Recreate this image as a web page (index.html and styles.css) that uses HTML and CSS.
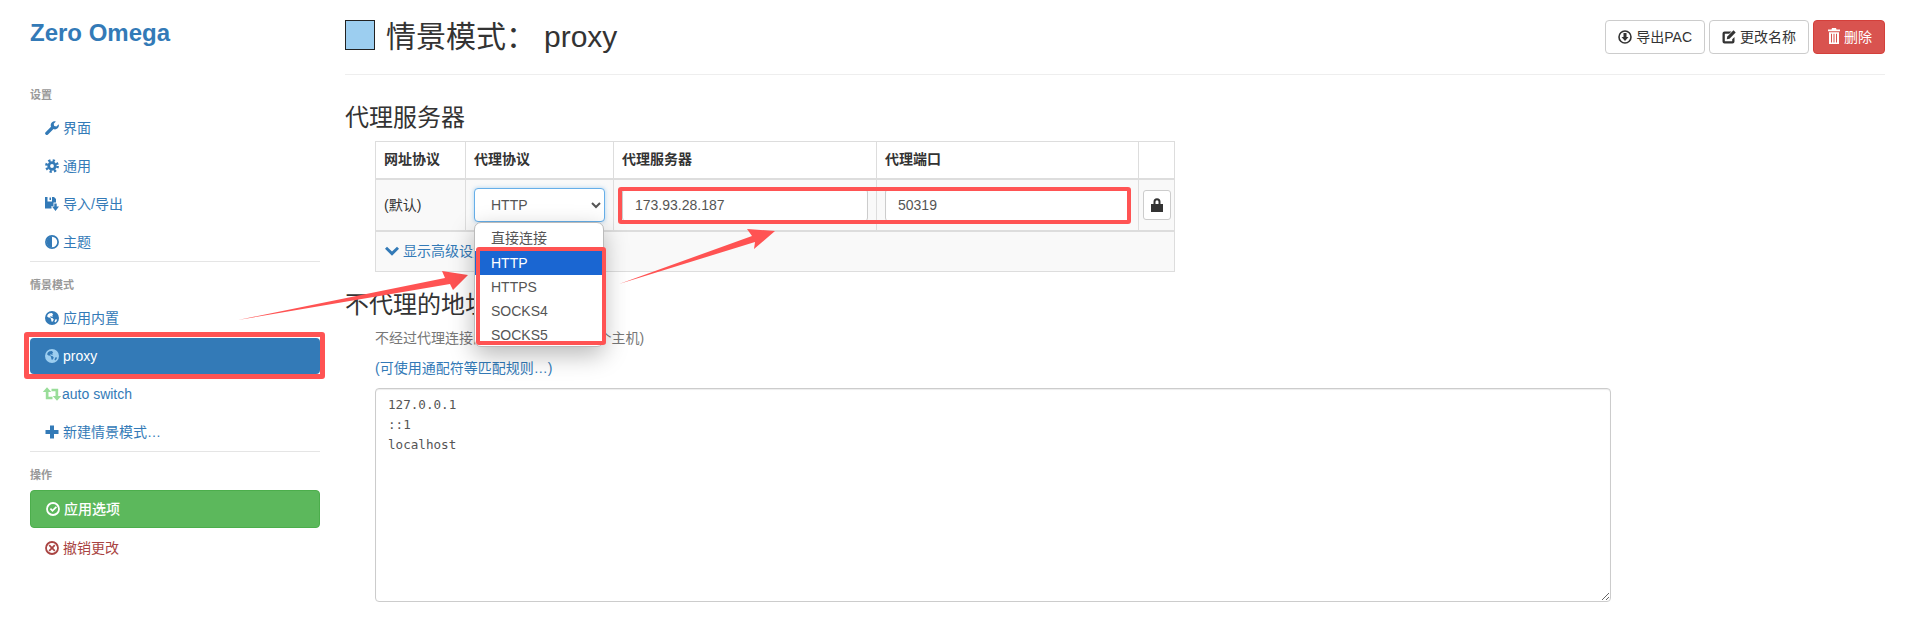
FILE: index.html
```html
<!DOCTYPE html>
<html lang="zh">
<head>
<meta charset="utf-8">
<title>Zero Omega</title>
<link rel="stylesheet" href="styles.css">
</head>
<body>
<svg class="sprite" aria-hidden="true">
  <symbol id="i-wrench" viewBox="0 0 14 14"><path d="M13.700 3.200a4 4 0 0 1-5.200 4.900L3 13.500a1.500 1.500 0 0 1-2.400-2.200L6 5.700A4 4 0 0 1 10.900.4L8.700 2.700l.5 2.200 2.200.5z"/></symbol>
  <symbol id="i-cog" viewBox="0 0 14 14"><circle cx="7" cy="7" r="3.300" fill="none" stroke="currentColor" stroke-width="2.800"/><circle cx="7" cy="7" r="5.600" fill="none" stroke="currentColor" stroke-width="2.600" stroke-dasharray="2.200 2.200"/></symbol>
  <symbol id="i-save" viewBox="0 0 14 14"><path fill-rule="evenodd" d="M0 0h2.500v4.500h4.500V0h2L11 2v3.500H8.500V9H6.500v2.500H0zM4.500.5h1.500v2.500H4.500z"/><path d="M9.300 6.500h2.400V9.500H14L10.500 14 7 9.500h2.300z"/></symbol>
  <symbol id="i-half" viewBox="0 0 14 14"><circle cx="7" cy="7" r="6.100" fill="none" stroke="currentColor" stroke-width="1.700"/><path d="M7 1.500a5.500 5.500 0 0 0 0 11z"/></symbol>
  <symbol id="i-globe" viewBox="0 0 14 14"><path fill-rule="evenodd" d="M7 0a7 7 0 1 1 0 14A7 7 0 0 1 7 0zM4.500 2.200 3 3.200 2 5.200l1.500 1.300 1.800.3.800 1.400.4 2.300 1 .2 1.300-2-1-1.400-2-.6-.8-1.200 1.200-.2.800.6.800-.6-.6-1 1-.8L6.900 2zM10.500 8.200l-1 2.400.6 1 1.400-1.400.6-1.800z"/></symbol>
  <symbol id="i-retweet" viewBox="0 0 18 14"><path d="M4 .3 8.300 5H5.500V9.700H9.500V12.300H2.800V5H-.3z"/><path d="M14 13.700 9.700 9H12.500V4.300H8.500V1.700H15.200V9H18.300z"/></symbol>
  <symbol id="i-plus" viewBox="0 0 14 14"><path d="M5 .5h4v4.500h4.500v4H9v4.500H5V9H.5V5H5z"/></symbol>
  <symbol id="i-ok" viewBox="0 0 14 14"><circle cx="7" cy="7" r="6" fill="none" stroke="currentColor" stroke-width="1.800"/><path d="M3.800 7.200 5 6l1.500 1.500L9.800 4.200 11 5.400 6.500 9.900z"/></symbol>
  <symbol id="i-remove" viewBox="0 0 14 14"><circle cx="7" cy="7" r="6" fill="none" stroke="currentColor" stroke-width="1.800"/><path d="M4.800 3.600 7 5.800l2.200-2.200 1.200 1.200L8.200 7l2.200 2.200-1.200 1.200L7 8.200l-2.200 2.200-1.200-1.200L5.800 7 3.600 4.800z"/></symbol>
  <symbol id="i-chevron" viewBox="0 0 14 14"><path d="M2 2.700 7 7.600l5-4.900 2 2-7 7-7-7z"/></symbol>
  <symbol id="i-lock" viewBox="0 0 14 14"><path fill-rule="evenodd" d="M3.500 6V3.700a3.500 3.500 0 0 1 7 0V6H13v8H1V6zm2 0h3V3.700a1.500 1.500 0 0 0-3 0z"/></symbol>
  <symbol id="i-down" viewBox="0 0 14 14"><circle cx="7" cy="7" r="6" fill="none" stroke="currentColor" stroke-width="1.600"/><path d="M5.500 3h3v4h2L7 11 3.500 7h2z"/></symbol>
  <symbol id="i-edit" viewBox="0 0 14 14"><path d="M9.500 1.500H2.500A2 2 0 0 0 .5 3.500v8a2 2 0 0 0 2 2h8a2 2 0 0 0 2-2V7l-2.300 2.300v1.900H2.800V3.800h4.400z"/><path d="M11.500.3 13.700 2.500 7.500 8.700 4.800 9.200l.5-2.700z"/></symbol>
  <symbol id="i-trash" viewBox="0 0 12 16"><path d="M4 0h4l.5 1.500H12V3.200H0V1.500h3.500z"/><path fill-rule="evenodd" d="M1 4.200h10V16H1zM3 5.700v8.800h1V5.700zm2.500 0v8.800h1V5.700zm2.500 0v8.800h1V5.700z"/></symbol>
</svg>

<div class="page">
  <aside class="sidebar">
    <div class="brand">Zero Omega</div>
    <div class="label label-first">设置</div>
    <ul class="nav">
      <li><a class="pill"><svg class="ico"><use href="#i-wrench"/></svg>界面</a></li>
      <li><a class="pill"><svg class="ico"><use href="#i-cog"/></svg>通用</a></li>
      <li><a class="pill"><svg class="ico"><use href="#i-save"/></svg>导入/导出</a></li>
      <li><a class="pill"><svg class="ico"><use href="#i-half"/></svg>主题</a></li>
    </ul>
    <div class="divider"></div>
    <div class="label">情景模式</div>
    <ul class="nav">
      <li><a class="pill"><svg class="ico"><use href="#i-globe"/></svg>应用内置</a></li>
      <li><a class="pill active"><svg class="ico ico-light"><use href="#i-globe"/></svg>proxy</a></li>
      <li><a class="pill"><svg class="ico-wide"><use href="#i-retweet"/></svg>auto switch</a></li>
      <li><a class="pill"><svg class="ico"><use href="#i-plus"/></svg>新建情景模式…</a></li>
    </ul>
    <div class="divider"></div>
    <div class="label">操作</div>
    <ul class="nav">
      <li><a class="pill apply"><svg class="ico"><use href="#i-ok"/></svg>应用选项</a></li>
      <li><a class="pill discard"><svg class="ico"><use href="#i-remove"/></svg>撤销更改</a></li>
    </ul>
  </aside>

  <main class="main">
    <header class="head">
      <h1 class="title"><span class="swatch"></span>情景模式： <span class="title-name">proxy</span></h1>
      <div class="actions">
        <a class="btn"><svg class="ico"><use href="#i-down"/></svg>导出PAC</a>
        <a class="btn"><svg class="ico"><use href="#i-edit"/></svg>更改名称</a>
        <a class="btn btn-danger"><svg class="ico-trash"><use href="#i-trash"/></svg>删除</a>
      </div>
    </header>

    <h3 class="section">代理服务器</h3>
    <table class="proxy">
      <colgroup>
        <col class="c1"><col class="c2"><col class="c3"><col class="c4"><col class="c5">
      </colgroup>
      <thead>
        <tr><th>网址协议</th><th>代理协议</th><th>代理服务器</th><th>代理端口</th><th></th></tr>
      </thead>
      <tbody>
        <tr>
          <td>(默认)</td>
          <td><select class="control select"><option>HTTP</option></select></td>
          <td><input class="control" value="173.93.28.187"></td>
          <td><input class="control" value="50319"></td>
          <td class="cell-lock"><a class="btn-lock"><svg class="ico-lock"><use href="#i-lock"/></svg></a></td>
        </tr>
      </tbody>
      <tfoot>
        <tr><td colspan="5"><a class="more"><svg class="ico-chev"><use href="#i-chevron"/></svg>显示高级设置</a></td></tr>
      </tfoot>
    </table>

    <h3 class="section section-second">不代理的地址列表</h3>
    <p class="help">不经过代理连接的主机列表: (每行一个主机)</p>
    <p class="help-link"><a>(可使用通配符等匹配规则…)</a></p>
    <textarea class="bypass" spellcheck="false">127.0.0.1
::1
localhost</textarea>
  </main>

  <svg class="arrows" viewBox="0 0 1911 620" aria-hidden="true">
    <polygon points="238,320 445,278 442,271 468,275 453,290 450,284"/>
    <polygon points="619,284 752,236 747,229 775,231 754,249 755,242"/>
  </svg>

  <div class="dropdown">
    <div class="opt opt-cjk">直接连接</div>
    <div class="opt opt-on">HTTP</div>
    <div class="opt">HTTPS</div>
    <div class="opt">SOCKS4</div>
    <div class="opt">SOCKS5</div>
  </div>

  <div class="mark mark-proxy"></div>
  <div class="mark mark-opts"></div>
  <div class="mark mark-addr"></div>
</div>
</body>
</html>
```
FILE: styles.css
```css
* { box-sizing: border-box; }
html, body { margin: 0; padding: 0; background: #fff; }
body {
  font-family: "Liberation Sans", "Noto Sans CJK SC", sans-serif;
  font-size: 14px;
  line-height: 20px;
  color: #333;
}
a { color: #337ab7; text-decoration: none; }
.sprite { position: absolute; width: 0; height: 0; }

.page { position: relative; display: flex; width: 1911px; height: 620px; overflow: hidden; }

.sidebar { flex: 0 0 345px; padding: 20px 25px 0 30px; }
.brand { font-size: 24px; font-weight: 700; line-height: 26px; color: #337ab7; }
.label { margin-top: 15px; font-size: 11px; font-weight: 700; line-height: 16px; color: #999; }
.label-first { margin-top: 41px; }
.nav { list-style: none; margin: 7px 0 0; padding: 0; display: flex; flex-direction: column; gap: 2px; }
.pill { display: flex; align-items: center; height: 36px; padding: 0 15px 1px; border-radius: 4px; color: #337ab7; }
.ico { flex: none; width: 14px; height: 14px; margin-right: 4px; fill: currentColor; color: inherit; }
.ico-wide { flex: none; width: 18px; height: 14px; margin: 0 1px 0 -2px; fill: #9d9; overflow: visible; }
.ico-light { fill: #9ccef0; color: #9ccef0; }
.pill.active { background: #337ab7; color: #fff; }
.pill.apply { height: 38px; background: #5cb85c; border: 1px solid #4cae4c; color: #fff; font-weight: 500; }
.pill.discard { color: #a94442; }
.divider { height: 1px; margin-top: 1px; background: #e5e5e5; }

.main { flex: 0 0 1540px; }
.head { display: flex; justify-content: space-between; height: 75px; padding-top: 20px; border-bottom: 1px solid #eee; }
.title { display: flex; align-items: flex-start; margin: 0; font-size: 30px; font-weight: 400; line-height: 33px; color: #333; }
.swatch { flex: none; width: 30px; height: 30px; margin-right: 11px; background: #9ccef0; border: 1px solid #222; }
.title-name { margin-left: 8px; }
.actions { display: flex; gap: 4px; align-items: flex-start; }
.btn { display: flex; align-items: center; height: 34px; padding: 0 12px; background: #fff; border: 1px solid #ccc; border-radius: 4px; color: #333; }
.btn-danger { padding-left: 14px; background: #d9534f; border-color: #d43f3a; color: #fff; }
.ico-trash { flex: none; width: 12px; height: 16px; margin: -2px 4px 0 0; fill: #fff; }

.section { margin: 30px 0 0; font-size: 24px; font-weight: 400; line-height: 26px; color: #333; }
.section-second { margin-top: 20px; }

.proxy { width: 799px; margin: 10px 0 0 30px; table-layout: fixed; border-collapse: collapse; border: 1px solid #ddd; }
.c1 { width: 90px; } .c2 { width: 148px; } .c3 { width: 263px; } .c4 { width: 262px; } .c5 { width: 36px; }
.proxy th { height: 37px; padding: 0 8px 2px; text-align: left; font-weight: 700; border: 1px solid #ddd; border-bottom-width: 2px; }
.proxy tbody td { height: 52px; padding: 0 8px; border: 1px solid #ddd; background: #f9f9f9; }
.proxy tfoot td { height: 41px; padding: 0 9px; border: 1px solid #ddd; border-top-width: 2px; background: #f9f9f9; }
.control { display: block; width: 100%; height: 34px; padding: 6px 12px; background: #fff; border: 1px solid #ccc; border-radius: 4px; font: inherit; color: #555; box-shadow: inset 0 1px 1px rgba(0,0,0,.075); }
.select { border-color: #66afe9; box-shadow: 0 0 4px rgba(102,175,233,.5); }
.cell-lock.cell-lock { padding: 0 3px 0 4px; }
.btn-lock { display: flex; align-items: center; justify-content: center; width: 28px; height: 30px; background: #fff; border: 1px solid #ccc; border-radius: 3px; }
.ico-lock { width: 14px; height: 14px; fill: #333; }
.more { display: flex; align-items: center; }
.ico-chev { flex: none; width: 14px; height: 14px; margin-right: 4px; fill: #337ab7; }

.help, .help-link { margin: 10px 0 0 30px; color: #777; }
.bypass { display: block; width: 1236px; height: 214px; margin: 10px 0 0 30px; padding: 6px 12px; background: #fff; border: 1px solid #ccc; border-radius: 4px; font-family: "DejaVu Sans Mono", monospace; font-size: 12.6px; line-height: 20px; color: #555; box-shadow: inset 0 1px 1px rgba(0,0,0,.075); resize: both; outline: 0; }

.arrows { position: absolute; left: 0; top: 0; width: 1911px; height: 620px; fill: #ff5353; pointer-events: none; }

.dropdown { position: absolute; left: 474px; top: 222px; width: 130px; height: 125px; padding-top: 4px; background: #fff; border: 1px solid #bbb; border-radius: 7px; box-shadow: 0 8px 24px rgba(0,0,0,.28); color: #555; overflow: hidden; }
.opt { height: 24px; padding: 0 16px; line-height: 24px; }
.opt-cjk { line-height: 22px; }
.opt-on { background: #1a66d2; color: #fff; }

.mark { position: absolute; border: 4px solid #ff5353; border-radius: 3px; pointer-events: none; }
.mark-proxy { left: 24px; top: 332px; width: 301px; height: 47px; border-width: 5px; }
.mark-opts { left: 476px; top: 247px; width: 130px; height: 98px; }
.mark-addr { left: 618px; top: 187px; width: 513px; height: 37px; }
```
